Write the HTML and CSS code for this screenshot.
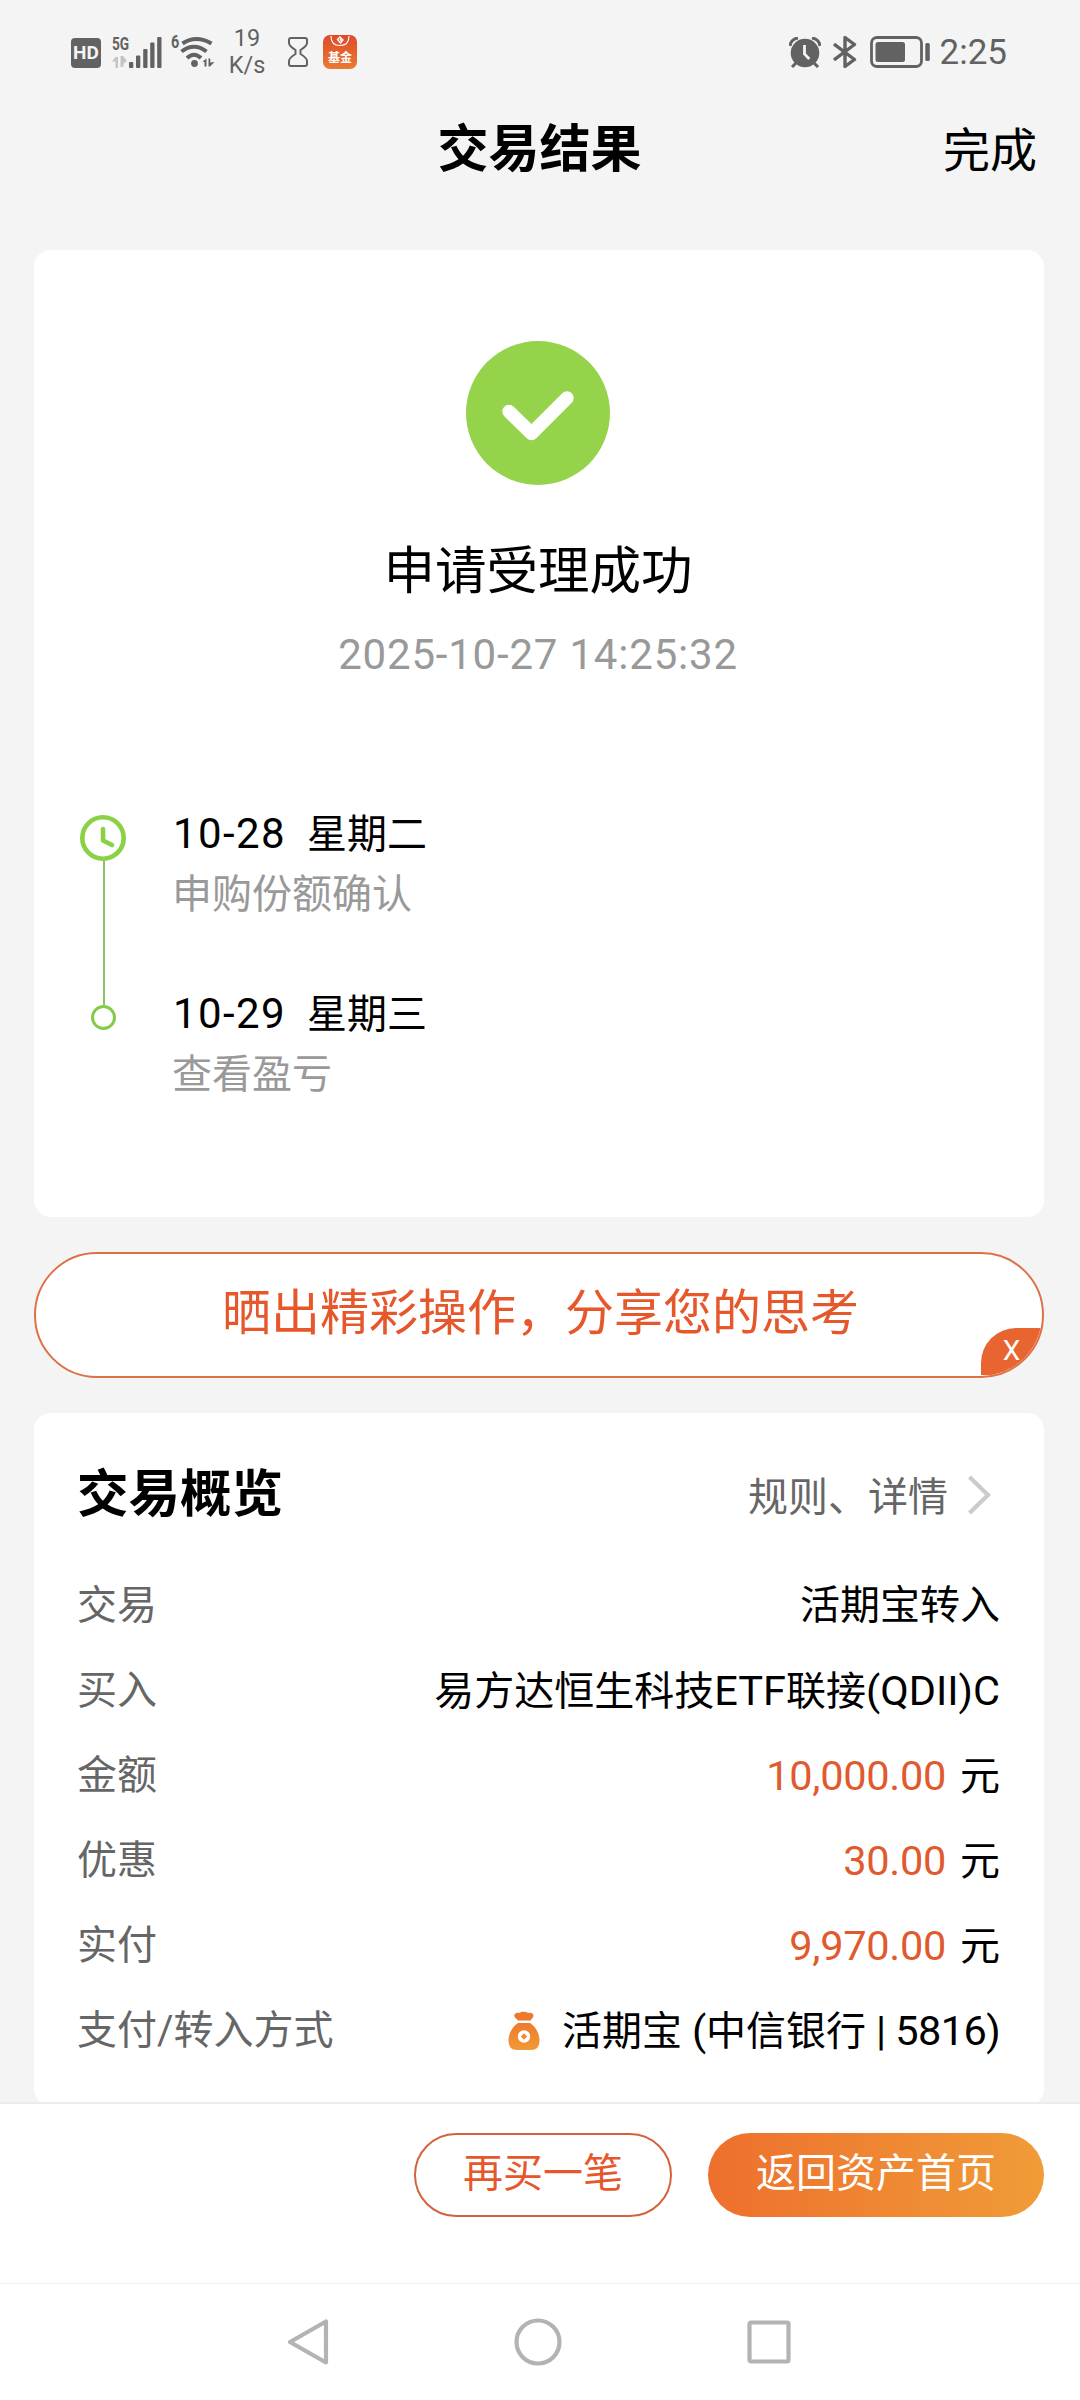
FILE: index.html
```html
<!DOCTYPE html>
<html lang="zh-CN">
<head>
<meta charset="utf-8">
<title>交易结果</title>
<link rel="stylesheet" href="styles.css">
</head>
<body>
<div class="screen">
  <div class="status">
    <div class="status-left">
      <div class="hd">HD</div>
      <div class="net">
        <span class="net-type">5G</span>
        <svg width="15" height="12" viewBox="0 0 15 12" fill="#c4c4c4"><path d="M3.500 1H6v11H3.500V5.500H0zM8.500 0H11l4 5-3 2-1 4H8.500z"/></svg>
      </div>
      <svg class="signal" width="33" height="31" viewBox="0 0 33 31" fill="#626262"><rect x="0" y="25" width="4.300" height="6" rx="1"/><rect x="7" y="18.500" width="4.300" height="12.500" rx="1"/><rect x="14.200" y="12" width="4.300" height="19" rx="1"/><rect x="21.200" y="5.500" width="4.300" height="25.500" rx="1"/><rect x="28.200" y="0" width="4.300" height="31" rx="1"/></svg>
      <span class="wifi-gen">6</span>
      <svg class="wifi" width="36" height="32" viewBox="0 0 36 32" fill="none" stroke="#626262" stroke-width="4"><path d="M2.500 7.500Q16 -1.500 31.500 7.500M1.500 15.500Q14 6 26.500 15.500M7 22Q14 15.500 21 22"/><circle cx="14.500" cy="27.500" r="3.400" fill="#626262" stroke="none"/><path d="M22.500 25.500 26.500 22.500V30.500H24.500V26zM28.500 22.500h1.800v4l4.200-.5-4.500 4.500h-1.500z" fill="#626262" stroke="none"/></svg>
      <div class="speed"><span>19</span><span>K/s</span></div>
      <svg class="hourglass" width="20" height="30" viewBox="0 0 20 30" fill="none" stroke="#626262" stroke-width="2"><path d="M3 1H17Q19 1 19 3V6Q19 9 12.500 13V17Q19 21 19 24V27Q19 29 17 29H3Q1 29 1 27V24Q1 21 7.500 17V13Q1 9 1 6V3Q1 1 3 1Z"/></svg>
      <div class="fund">
        <svg width="34" height="14" viewBox="0 0 34 14" fill="none" stroke="#fff"><path d="M8 1Q8 10.500 17 10.500T26 1" stroke-width="1.200"/><path d="M14.500 4.500 17 2l3 3-2.500 3zM17 4l1.500 2" stroke-width="1.300"/></svg>
        <span>基金</span>
      </div>
    </div>
    <div class="status-right">
      <svg width="32" height="31" viewBox="0 0 32 31"><circle cx="16" cy="16" r="14.300" fill="#626262"/><path d="M1 9Q2 2 9 1M23 1Q30 2 31 9M7 26l-4 4M25 26l4 4" stroke="#626262" stroke-width="3" fill="none"/><path d="M15.500 8V17l4.800 5" stroke="#f4f4f4" stroke-width="2.800" fill="none"/></svg>
      <svg class="bluetooth" width="24" height="34" viewBox="0 0 24 34" fill="none" stroke="#626262" stroke-width="3.400" stroke-linejoin="round"><path d="M1 9 21.500 24.500 12 31.500V2.500L21.500 9.500 1 25"/></svg>
      <svg class="battery" width="60" height="32" viewBox="0 0 60 32"><rect x="1.500" y="1.500" width="50" height="29" rx="5.500" fill="none" stroke="#626262" stroke-width="2.800"/><rect x="5.500" y="6" width="29.500" height="20" rx="2.500" fill="#626262"/><rect x="55.300" y="7" width="4.500" height="18" rx="1.500" fill="#626262"/></svg>
      <span class="clock">2:25</span>
    </div>
  </div>

  <header class="topbar">
    <h1>交易结果</h1>
    <span class="done">完成</span>
  </header>

  <main class="content">
    <section class="card result">
      <svg width="144" height="144" viewBox="0 0 144 144"><circle cx="72" cy="72" r="72" fill="#94d34a"/><path d="M43 70.500 65.500 92.500 101 57" fill="none" stroke="#fff" stroke-width="13.500" stroke-linecap="round" stroke-linejoin="round"/></svg>
      <div class="result-title">申请受理成功</div>
      <div class="result-time">2025-10-27 14:25:32</div>
      <div class="timeline">
        <div class="rail">
          <svg width="46" height="46" viewBox="0 0 46 46" fill="none" stroke="#8ad145"><circle cx="23" cy="23" r="20.700" stroke-width="4.600"/><path d="M23 14V25.500L32 30" stroke-width="4.600" stroke-linecap="round" stroke-linejoin="round"/></svg>
          <div class="line"></div>
          <div class="node"></div>
        </div>
        <div class="steps">
          <div class="step"><div class="day"><span class="date">10-28</span><span>星期二</span></div><div class="note">申购份额确认</div></div>
          <div class="step"><div class="day"><span class="date">10-29</span><span>星期三</span></div><div class="note">查看盈亏</div></div>
        </div>
      </div>
    </section>

    <div class="share"><span class="share-text">晒出精彩操作，分享您的思考</span><span class="close">X</span></div>

    <section class="card overview">
      <div class="overview-head">
        <h2>交易概览</h2>
        <div class="more"><span>规则、详情</span><svg width="23" height="40" viewBox="0 0 23 40" fill="none" stroke="#cbcbcb" stroke-width="4.200"><path d="M1.500 2 20 20 1.500 38"/></svg></div>
      </div>
      <div class="row"><span class="label">交易</span><span class="value">活期宝转入</span></div>
      <div class="row"><span class="label">买入</span><span class="value">易方达恒生科技<span class="latin">ETF</span>联接<span class="latin">(QDII)C</span></span></div>
      <div class="row"><span class="label">金额</span><span class="value"><span class="money">10,000.00</span>元</span></div>
      <div class="row"><span class="label">优惠</span><span class="value"><span class="money">30.00</span>元</span></div>
      <div class="row"><span class="label">实付</span><span class="value"><span class="money">9,970.00</span>元</span></div>
      <div class="row"><span class="label">支付/转入方式</span><span class="value pay">
        <svg width="32" height="40" viewBox="0 0 32 40"><defs><linearGradient id="bag" x1="0" y1="0" x2="0" y2="1"><stop offset="0" stop-color="#ef7a2e"/><stop offset="1" stop-color="#f09a36"/></linearGradient></defs><path d="M10 9.500C8 7 5.500 6 6.500 3.500 7.500 1.500 10 1.500 11.500 2 13 .3 18 .3 20 2c2-.6 4.500-.3 5.300 1.700C26 6 24 7 22.500 9.500z" fill="#ee792d"/><path d="M10 12H22C27 15 31.500 22 31.500 29.500Q31.500 39 23 39H9Q.5 39 .5 29.500C.5 22 5 15 10 12z" fill="url(#bag)"/><circle cx="16" cy="25.500" r="6.200" fill="#fff"/><path d="M16 22.300l3.200 3.200-3.200 3.200-3.200-3.200z" fill="#f08b32"/></svg>
        <span>活期宝 <span class="latin">(</span>中信银行 <span class="card-no">| 5816)</span></span></span></div>
    </section>
  </main>

  <footer class="actions">
    <div class="btn outline">再买一笔</div>
    <div class="btn solid">返回资产首页</div>
  </footer>

  <nav class="nav">
    <svg width="42" height="48" viewBox="0 0 42 48"><path d="M39 3.500V44.500L3 24z" stroke-linejoin="round"/></svg>
    <svg width="48" height="48" viewBox="0 0 48 48"><circle cx="24" cy="24" r="21.500"/></svg>
    <svg width="44" height="44" viewBox="0 0 44 44"><rect x="2.500" y="2.500" width="39" height="39" rx="1.500"/></svg>
  </nav>
</div>
</body>
</html>
```
FILE: styles.css
```css
* { box-sizing: border-box; }
body {
  margin: 0;
  background: #f4f4f4;
  color: #000;
  font-family: Roboto, "Noto Sans CJK SC", sans-serif;
}
svg { display: block; flex: none; }
h1, h2 { margin: 0; }

.screen {
  width: 1080px;
  height: 2400px;
  display: flex;
  flex-direction: column;
  overflow: hidden;
}

/* status bar */
.status {
  height: 104px;
  flex: none;
  display: flex;
  justify-content: space-between;
  padding: 0 73px 0 71px;
  color: #626262;
}
.status-left, .status-right { display: flex; align-items: center; }
.hd {
  width: 30px;
  height: 30px;
  margin-top: 2px;
  border-radius: 4px;
  background: #626262;
  color: #f4f4f4;
  font: bold 19px/30px Roboto, sans-serif;
  text-align: center;
}
.net { width: 18px; height: 31px; margin-left: 11px; display: flex; flex-direction: column; justify-content: space-between; }
.net-type { font: bold 19px/14px Roboto, sans-serif; transform: scaleX(.72); transform-origin: left; }
.signal { margin-left: -1px; }
.wifi-gen { margin: -20px 0 0 9px; width: 8px; font: bold 18px/18px Roboto, sans-serif; transform: scaleX(.8); transform-origin: left; }
.wifi { margin-left: 1px; }
.speed { width: 38px; margin: 0 0 0 12px; display: flex; flex-direction: column; text-align: center; font-size: 23.500px; line-height: 27px; }
.hourglass { margin-left: 22px; }
.fund {
  width: 34px;
  height: 34px;
  margin-left: 15px;
  border-radius: 7px;
  background: linear-gradient(#de4a2c, #ea7a30);
  color: #fff;
  font: bold 12px/16px "Noto Sans CJK SC", sans-serif;
  text-align: center;
}
.bluetooth { margin-left: 12px; }
.battery { margin-left: 13px; }
.clock { margin-left: 10px; font-size: 35px; line-height: 42px; padding-top: 1px; }

/* page header */
.topbar {
  height: 146px;
  flex: none;
  display: grid;
  grid-template-columns: 1fr auto 1fr;
  padding: 12px 43px 0 42px;
}
h1 { grid-column: 2; font-size: 51px; line-height: 68px; font-weight: 700; }
.done { justify-self: end; font-size: 47px; line-height: 70px; }

.content {
  height: 1852px;
  flex: none;
  overflow: hidden;
  padding: 0 36px 0 34px;
}
.card { background: #fff; border-radius: 17px; }

/* result */
.result {
  height: 967px;
  padding: 91px 2px 0 0;
  display: flex;
  flex-direction: column;
  align-items: center;
}
.result-title { margin-top: 52px; font-size: 51.500px; line-height: 70px; }
.result-time { margin-top: 23px; color: #999; font-size: 42px; line-height: 50px; letter-spacing: .8px; }
.timeline { align-self: stretch; display: flex; gap: 46px; margin-top: 129px; padding-left: 46px; }
.rail { width: 46px; padding-top: 6px; display: flex; flex-direction: column; align-items: center; }
.line { width: 2px; height: 144px; margin-left: 2px; background: #8bc263; }
.node { width: 25px; height: 25px; border: 3px solid #86cb47; border-radius: 50%; }
.step { height: 180px; font-size: 40px; }
.day { display: flex; align-items: baseline; gap: 21px; line-height: 50px; }
.date { margin-left: 1px; font-size: 42px; letter-spacing: 1.400px; }
.note { margin-top: 10px; line-height: 50px; color: #999; }

/* share banner */
.share {
  position: relative;
  height: 126px;
  margin: 35px 0;
  padding-left: 3px;
  border: 2px solid #dc7148;
  border-radius: 63px;
  background: #fff;
  overflow: hidden;
  color: #e6572b;
  font-size: 49px;
  line-height: 120px;
  text-align: center;
}
.close {
  position: absolute;
  right: 0;
  bottom: 1px;
  width: 61px;
  height: 47px;
  border-top-left-radius: 35px;
  background: #e86430;
  color: #fff;
  font-size: 28px;
  line-height: 46px;
}

/* overview */
.overview { height: 693px; padding: 39px 44px 0 43px; }
.overview-head { height: 85px; display: flex; justify-content: space-between; margin-bottom: 26px; }
h2 { font-size: 51.500px; line-height: 86px; font-weight: 700; }
.more { display: flex; align-items: center; gap: 20px; margin-right: 9px; color: #666; font-size: 40px; }
.more span { margin-top: -2px; }
.row { height: 85px; display: flex; justify-content: space-between; font-size: 40px; line-height: 85px; white-space: nowrap; }
.label { color: #666; }
.latin { font-size: 41.500px; }
.card-no { font-size: 41.500px; letter-spacing: -.6px; }
.money { margin-right: 14px; color: #e05a2e; font-size: 41.500px; letter-spacing: -.3px; }
.pay { display: flex; align-items: center; gap: 22px; }

/* bottom actions */
.actions {
  height: 181px;
  flex: none;
  display: flex;
  justify-content: flex-end;
  gap: 36px;
  padding: 29px 36px 0 0;
  border-top: 2px solid #ececec;
  background: #fff;
}
.btn { height: 84px; border-radius: 42px; font-size: 40px; line-height: 82px; text-align: center; }
.outline { width: 258px; border: 2px solid #d4623c; color: #e6572b; line-height: 77px; }
.solid { width: 336px; background: linear-gradient(90deg, #ee6f2d, #f09c38); color: #fff; }

/* system navigation */
.nav {
  flex: 1;
  display: flex;
  align-items: center;
  justify-content: space-between;
  padding: 0 289px 0 287px;
  border-top: 1px solid #efefef;
  background: #fff;
}
.nav path, .nav circle, .nav rect { fill: none; stroke: #b3b3b3; stroke-width: 4.200px; }
```
